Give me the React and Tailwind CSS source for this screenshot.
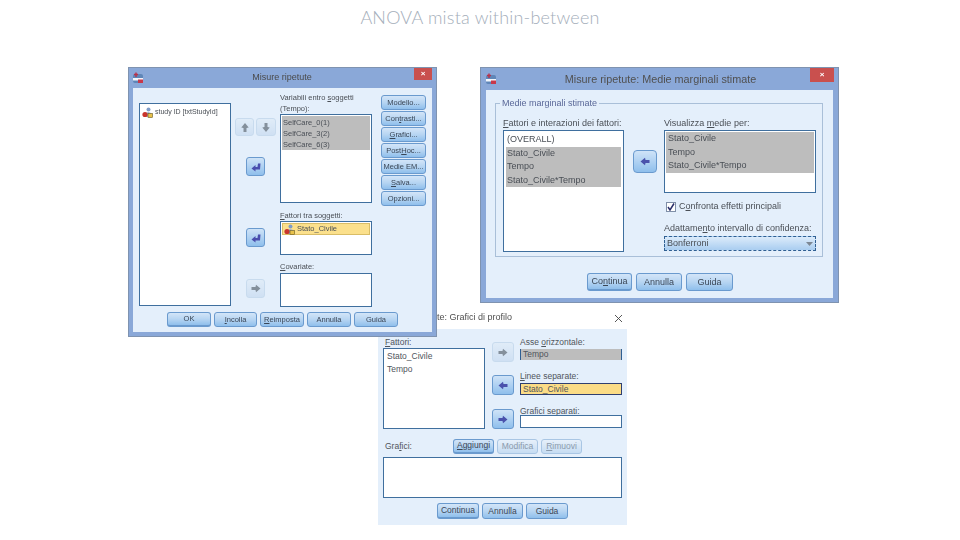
import React from 'react';

const DIALOG_FONT = "font-['Liberation_Sans',Arial,sans-serif]";

const Btn = ({ children, className = "", def = false, off = false }) => (
  <div
    className={`flex items-center justify-center shrink-0 rounded-[3px] border leading-none whitespace-nowrap ${
      off
        ? "border-[#a9c6e4] bg-gradient-to-b from-[#e6f0fa] to-[#c6dcf2] text-[#8a9aac]"
        : "border-[#6a9ace] bg-gradient-to-b from-[#d3e5f8] via-[#b7d5f2] to-[#8fbfec] text-[#3a4656]"
    } ${def ? "border-[#2f5f92] border-b-2" : ""} ${className}`}
  >
    {children}
  </div>
);

const ArrowBtn = ({ dir = "left", off = false, className = "" }) => (
  <div
    className={`flex items-center justify-center shrink-0 rounded-[3px] border ${
      off
        ? "border-[#c8dbee] bg-gradient-to-b from-[#e0ecf8] to-[#cfe0f3]"
        : "border-[#6a9ace] bg-gradient-to-b from-[#cfe3f7] to-[#8fbfec]"
    } ${className}`}
  >
    <svg width="10" height="9" viewBox="0 0 10 9" className={dir === "right" ? "-scale-x-100" : ""}>
      <path
        d="M0.5 4.5 L5 0.8 L5.5 3 H9.5 V6 H5.5 L5 8.2 Z"
        fill={off ? "#84909c" : "#4a52ac"}
      />
    </svg>
  </div>
);

const EnterBtn = ({ className = "" }) => (
  <div className={`flex items-center justify-center shrink-0 rounded-[3px] border border-[#6a9ace] bg-gradient-to-b from-[#cfe3f7] to-[#8fbfec] ${className}`}>
    <svg width="10" height="10" viewBox="0 0 10 10">
      <path d="M0.5 6.5 L4.5 3 V5 H6.5 L7 1.5 H9.5 L9 7.5 H4.5 V9.5 Z" fill="#4a4eae" />
    </svg>
  </div>
);

const VarIcon = () => (
  <svg width="11" height="11" viewBox="0 0 11 11" className="shrink-0">
    <circle cx="6.5" cy="2.6" r="2" fill="#7f9cc8" />
    <path d="M3 7 Q6 3 10 7 V10 H3 Z" fill="#9fb4d6" />
    <circle cx="3" cy="7.5" r="2.6" fill="#c9342c" />
    <rect x="6" y="6.5" width="4.5" height="4" fill="#e8c14a" stroke="#6a5a20" strokeWidth="0.6" />
  </svg>
);

const AppIcon = () => (
  <svg width="12" height="12" viewBox="0 0 12 12">
    <rect x="1" y="2" width="10" height="9" rx="2" fill="#5f86b8" />
    <rect x="1" y="6" width="10" height="2.5" fill="#f2f6fb" />
    <rect x="6" y="7.5" width="5" height="3.5" fill="#c8384a" />
    <path d="M4 0.5 V5 M2 2.5 H6" stroke="#b8324a" strokeWidth="1.4" />
  </svg>
);

const ListBox = ({ className = "", children }) => (
  <div className={`bg-white border border-[#3f6f9e] shrink-0 ${className}`}>{children}</div>
);

const GreyRows = ({ rows, className = "" }) => (
  <div className={`bg-[#bdbdbd] ${className}`}>
    {rows.map((r) => (
      <div key={r} className="whitespace-nowrap">{r}</div>
    ))}
  </div>
);

const CloseBox = ({ className = "" }) => (
  <div className={`bg-[#c9504e] flex items-center justify-center text-white text-[8px] font-bold leading-none ${className}`}>×</div>
);

const MisureRipetute = () => (
  <div className={`absolute left-[128px] top-[67px] w-[309px] h-[270px] bg-[#8aa8d8] border border-[#7f93b0] px-[4px] pb-[4px] flex flex-col ${DIALOG_FONT} blur-[0.45px]`}>
    <div className="h-[20px] flex items-center shrink-0 text-[9px] text-[#4a4a4a]">
      <div className="w-[12px] -ml-[1px]"><AppIcon /></div>
      <div className="flex-1 text-center pl-[6px]">Misure ripetute</div>
      <CloseBox className="w-[18px] h-[12px] -mt-[8px]" />
    </div>
    <div className="flex-1 bg-[#e4effb] flex flex-col text-[7.5px] text-[#4a4f56]">
      <div className="flex items-start">
        <ListBox className="w-[92px] h-[203px] ml-[6px] mt-[15px] p-[1px]">
          <div className="flex items-center gap-[2px] pl-[1px] pt-[2px] text-[7px]">
            <VarIcon />
            <span>study ID [txtStudyId]</span>
          </div>
        </ListBox>

        <div className="w-[49px] shrink-0 flex flex-col">
          <div className="flex gap-[2px] pl-[4px] mt-[30px]">
            <ArrowBtn off className="w-[19px] h-[18px] [&>svg]:rotate-90" />
            <ArrowBtn off className="w-[20px] h-[18px] [&>svg]:-rotate-90" />
          </div>
          <EnterBtn className="w-[19px] h-[19px] ml-[15px] mt-[21px]" />
          <EnterBtn className="w-[19px] h-[19px] ml-[15px] mt-[52px]" />
          <ArrowBtn dir="right" off className="w-[19px] h-[19px] ml-[15px] mt-[32px]" />
        </div>

        <div className="w-[92px] shrink-0 flex flex-col">
          <div className="mt-[5px] h-[21px] leading-[10.5px] whitespace-nowrap">
            Variabili entro <u>s</u>oggetti
            <br />
            (Tempo):
          </div>
          <ListBox className="w-[92px] h-[89px] p-[1px] leading-[11px] text-[7.5px]">
            <GreyRows rows={["SelfCare_0(1)", "SelfCare_3(2)", "SelfCare_6(3)"]} className="px-[1px] py-[0.5px]" />
          </ListBox>
          <div className="mt-[7px] h-[11px] leading-[11px]"><u>F</u>attori tra soggetti:</div>
          <ListBox className="w-[92px] h-[34px] p-[1px]">
            <div className="bg-[#fbe08c] border border-[#d9bd66] h-[12px] flex items-center gap-[2px] pl-[1px] text-[7.5px]">
              <VarIcon />
              <span>Stato_Civile</span>
            </div>
          </ListBox>
          <div className="mt-[7px] h-[10px] leading-[10px]"><u>C</u>ovariate:</div>
          <ListBox className="w-[92px] h-[34px] mt-[1px]" />
        </div>

        <div className="ml-[9px] mt-[7px] flex flex-col gap-[1px]">
          <Btn className="w-[45px] h-[15px]">Modello...</Btn>
          <Btn className="w-[45px] h-[15px]">Con<u>t</u>rasti...</Btn>
          <Btn className="w-[45px] h-[15px]"><u>G</u>rafici...</Btn>
          <Btn className="w-[45px] h-[15px]">Post <u>H</u>oc...</Btn>
          <Btn className="w-[45px] h-[15px]">Medie EM...</Btn>
          <Btn className="w-[45px] h-[15px]"><u>S</u>alva...</Btn>
          <Btn className="w-[45px] h-[15px]">Opzioni...</Btn>
        </div>
      </div>

      <div className="flex gap-[3px] pl-[34px] mt-[5px]">
        <Btn def className="w-[44px] h-[15px]">OK</Btn>
        <Btn className="w-[43px] h-[15px]"><u>I</u>ncolla</Btn>
        <Btn className="w-[44px] h-[15px]"><u>R</u>eimposta</Btn>
        <Btn className="w-[44px] h-[15px]">Annulla</Btn>
        <Btn className="w-[44px] h-[15px]">Guida</Btn>
      </div>
    </div>
  </div>
);

const MedieMarginali = () => (
  <div className={`absolute left-[480px] top-[67px] w-[359px] h-[236px] bg-[#8aa8d8] border border-[#7f93b0] px-[5px] pb-[4px] flex flex-col ${DIALOG_FONT} blur-[0.45px]`}>
    <div className="h-[22px] flex items-center shrink-0 text-[10.8px] text-[#505050]">
      <div className="w-[12px] -ml-[1px]"><AppIcon /></div>
      <div className="flex-1 text-center pl-[14px]">Misure ripetute: Medie marginali stimate</div>
      <CloseBox className="w-[24px] h-[14px] -mt-[9px] -mr-[1px]" />
    </div>
    <div className="flex-1 bg-[#e4effb] pt-[13px] px-[9px] flex flex-col text-[9px] text-[#4a4f56]">
      <div className="relative border border-[#a9bfd8] h-[154px] w-[328px] shrink-0 pl-[7px] pt-[14px] flex">
        <div className="absolute left-[4px] -top-[6px] bg-[#e4effb] px-[2px] text-[9px] leading-[11px] text-[#5a6898]">Medie marginali stimate</div>
        <div className="flex flex-col w-[121px] shrink-0">
          <div className="h-[10px] leading-[10px] whitespace-nowrap"><u>F</u>attori e interazioni dei fattori:</div>
          <ListBox className="w-[121px] h-[122px] mt-[2px] p-[2px] leading-[13.5px]">
            <div className="px-[1px]">(OVERALL)</div>
            <GreyRows rows={["Stato_Civile", "Tempo", "Stato_Civile*Tempo"]} className="px-[1px]" />
          </ListBox>
        </div>
        <ArrowBtn className="w-[24px] h-[23px] ml-[9px] mt-[32px] rounded-[4px]" />
        <div className="flex flex-col w-[152px] ml-[7px] shrink-0">
          <div className="h-[10px] leading-[10px] whitespace-nowrap">Visualizza <u>m</u>edie per:</div>
          <ListBox className="w-[152px] h-[63px] mt-[2px] p-[1px] leading-[13.5px]">
            <GreyRows rows={["Stato_Civile", "Tempo", "Stato_Civile*Tempo"]} className="px-[2px]" />
          </ListBox>
          <div className="flex items-center gap-[3px] mt-[9px] h-[10px] pl-[2px]">
            <div className="w-[10px] h-[10px] bg-white border border-[#7f8fa8] flex items-center justify-center">
              <svg width="8" height="8" viewBox="0 0 8 8"><path d="M1 4 L3 7 L7 0.5" fill="none" stroke="#2a2f6a" strokeWidth="1.5" /></svg>
            </div>
            <span>C<u>o</u>nfronta effetti principali</span>
          </div>
          <div className="mt-[11px] h-[10px] leading-[10px] whitespace-nowrap">Adattame<u>n</u>to intervallo di confidenza:</div>
          <div className="w-[152px] h-[15px] mt-[3px] flex items-center justify-between px-[2px] border border-dashed border-[#2f5f92] bg-gradient-to-b from-[#dcebfa] to-[#a9cdf0]">
            <span>Bonferroni</span>
            <svg width="7" height="4" viewBox="0 0 7 4"><path d="M0 0 H7 L3.5 4 Z" fill="#7c8794" /></svg>
          </div>
        </div>
      </div>
      <div className="flex gap-[4px] pl-[92px] mt-[16px]">
        <Btn def className="w-[45px] h-[18px] text-[9px]">Co<u>n</u>tinua</Btn>
        <Btn className="w-[46px] h-[18px] text-[9px]">Annulla</Btn>
        <Btn className="w-[47px] h-[18px] text-[9px]">Guida</Btn>
      </div>
    </div>
  </div>
);

const GraficiProfilo = () => (
  <div className={`absolute left-[378px] top-[305px] w-[249px] flex flex-col ${DIALOG_FONT} blur-[0.45px]`}>
    <div className="h-[24px] flex items-center shrink-0 pl-[54px] pr-[4px] pt-[2px] text-[9px] text-[#505050]">
      <span className="flex-1">ute: Grafici di profilo</span>
      <svg width="9" height="9" viewBox="0 0 9 9"><path d="M1 1 L8 8 M8 1 L1 8" stroke="#444" strokeWidth="0.9" /></svg>
    </div>
    <div className="h-[196px] bg-[#e4effb] px-[5px] flex flex-col text-[8.5px] text-[#50555c]">
      <div className="flex items-start">
        <div className="flex flex-col w-[102px] shrink-0 mt-[6px]">
          <div className="h-[10px] leading-[10px] pl-[2px] mt-[2px]"><u>F</u>attori:</div>
          <ListBox className="w-[102px] h-[81px] mt-[1px] px-[3px] pt-[1px] leading-[13px]">
            <div>Stato_Civile</div>
            <div>Tempo</div>
          </ListBox>
        </div>
        <div className="flex flex-col ml-[7px] mt-[13px]">
          <ArrowBtn dir="right" off className="w-[22px] h-[20px]" />
          <ArrowBtn className="w-[22px] h-[20px] mt-[13px]" />
          <ArrowBtn dir="right" className="w-[22px] h-[20px] mt-[14px]" />
        </div>
        <div className="flex flex-col w-[102px] ml-[6px] shrink-0 mt-[8px]">
          <div className="h-[10px] leading-[10px] whitespace-nowrap">Asse <u>o</u>rizzontale:</div>
          <div className="h-[11px] mt-[2px] bg-[#bdbdbd] border-r border-l border-[#2f5f92] px-[2px] leading-[11px]">Tempo</div>
          <div className="h-[10px] leading-[10px] whitespace-nowrap mt-[11px]"><u>L</u>inee separate:</div>
          <div className="h-[12px] mt-[2px] bg-[#fbdc86] border border-[#2f3f6f] px-[2px] leading-[11px]">Stato_Civile</div>
          <div className="h-[10px] leading-[10px] whitespace-nowrap mt-[11px]">Grafici se<u>p</u>arati:</div>
          <ListBox className="w-[102px] h-[13px] mt-[-1px]" />
        </div>
      </div>
      <div className="flex items-center mt-[9px] h-[16px]">
        <span className="w-[70px] pl-[2px]">Gra<u>f</u>ici:</span>
        <Btn def className="w-[41px] h-[15px] border-b-1"><u>A</u>ggiungi</Btn>
        <Btn off className="w-[41px] h-[15px] ml-[3px]">Modifica</Btn>
        <Btn off className="w-[41px] h-[15px] ml-[3px]"><u>R</u>imuovi</Btn>
      </div>
      <ListBox className="w-[239px] h-[41px] mt-[3px]" />
      <div className="flex gap-[3px] pl-[54px] mt-[5px]">
        <Btn def className="w-[42px] h-[16px]">Continua</Btn>
        <Btn className="w-[41px] h-[16px]">Annulla</Btn>
        <Btn className="w-[42px] h-[16px]">Guida</Btn>
      </div>
    </div>
  </div>
);

const App = () => (
  <div className="relative w-[960px] h-[540px] bg-white overflow-hidden">
    <h1 className="pt-[7px] text-center text-[18px] leading-[20px] font-light tracking-[0.2px] text-[#a4aeba] font-['Lato',sans-serif]">
      ANOVA mista within-between
    </h1>
    <GraficiProfilo />
    <MisureRipetute />
    <MedieMarginali />
  </div>
);

export default App;
